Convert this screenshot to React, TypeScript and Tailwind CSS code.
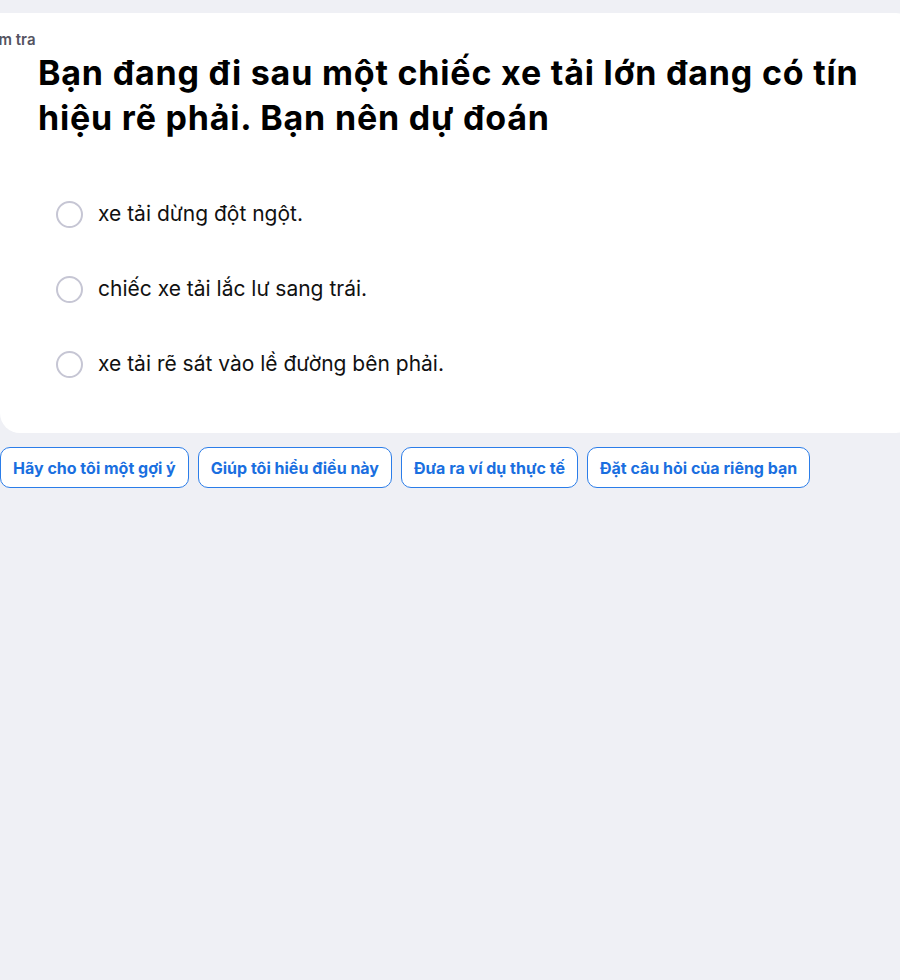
import React from "react";

const options = [
  "xe tải dừng đột ngột.",
  "chiếc xe tải lắc lư sang trái.",
  "xe tải rẽ sát vào lề đường bên phải.",
];

const prompts = [
  "Hãy cho tôi một gợi ý",
  "Giúp tôi hiểu điều này",
  "Đưa ra ví dụ thực tế",
  "Đặt câu hỏi của riêng bạn",
];

export default function App() {
  return (
    <main
      className="min-h-[980px] w-[900px] overflow-hidden bg-[#eff0f5] pt-[13px]"
      style={{ fontFamily: "Inter, 'Noto Sans', sans-serif" }}
    >
      {/* ================= QUESTION CARD ================= */}
      <section className="w-[916px] rounded-bl-[20px] rounded-tr-[20px] rounded-br-[20px] bg-white pb-[55px]">
        <div className="-ml-[25px] pt-[18px] text-[15px] font-semibold leading-[18px] text-[#555461]">
          Kiểm tra
        </div>
        <h1 className="mt-[1px] pl-[38px] pr-[30px] text-[34px] font-bold leading-[45px] tracking-[0.8px] text-black">
          Bạn đang đi sau một chiếc xe tải lớn đang có tín hiệu rẽ phải. Bạn nên dự đoán
        </h1>

        <ul className="mt-[60px] flex flex-col gap-[47px] pl-[56px]">
          {options.map((o) => (
            <li key={o} className="flex h-[28px] items-center gap-[15px]">
              <span className="h-[27px] w-[27px] shrink-0 rounded-full border-2 border-[#c6c6d4] bg-white" />
              <span className="text-[21px] leading-[28px] text-[#111]">{o}</span>
            </li>
          ))}
        </ul>
      </section>

      {/* ================= PROMPTS ================= */}
      <div className="mt-[14px] flex gap-[9px]">
        {prompts.map((p) => (
          <button
            key={p}
            className="h-[41px] rounded-[10px] border border-[#2b7de9] bg-white px-[12px] text-[16px] font-bold text-[#1a6fe0]"
          >
            {p}
          </button>
        ))}
      </div>
    </main>
  );
}
